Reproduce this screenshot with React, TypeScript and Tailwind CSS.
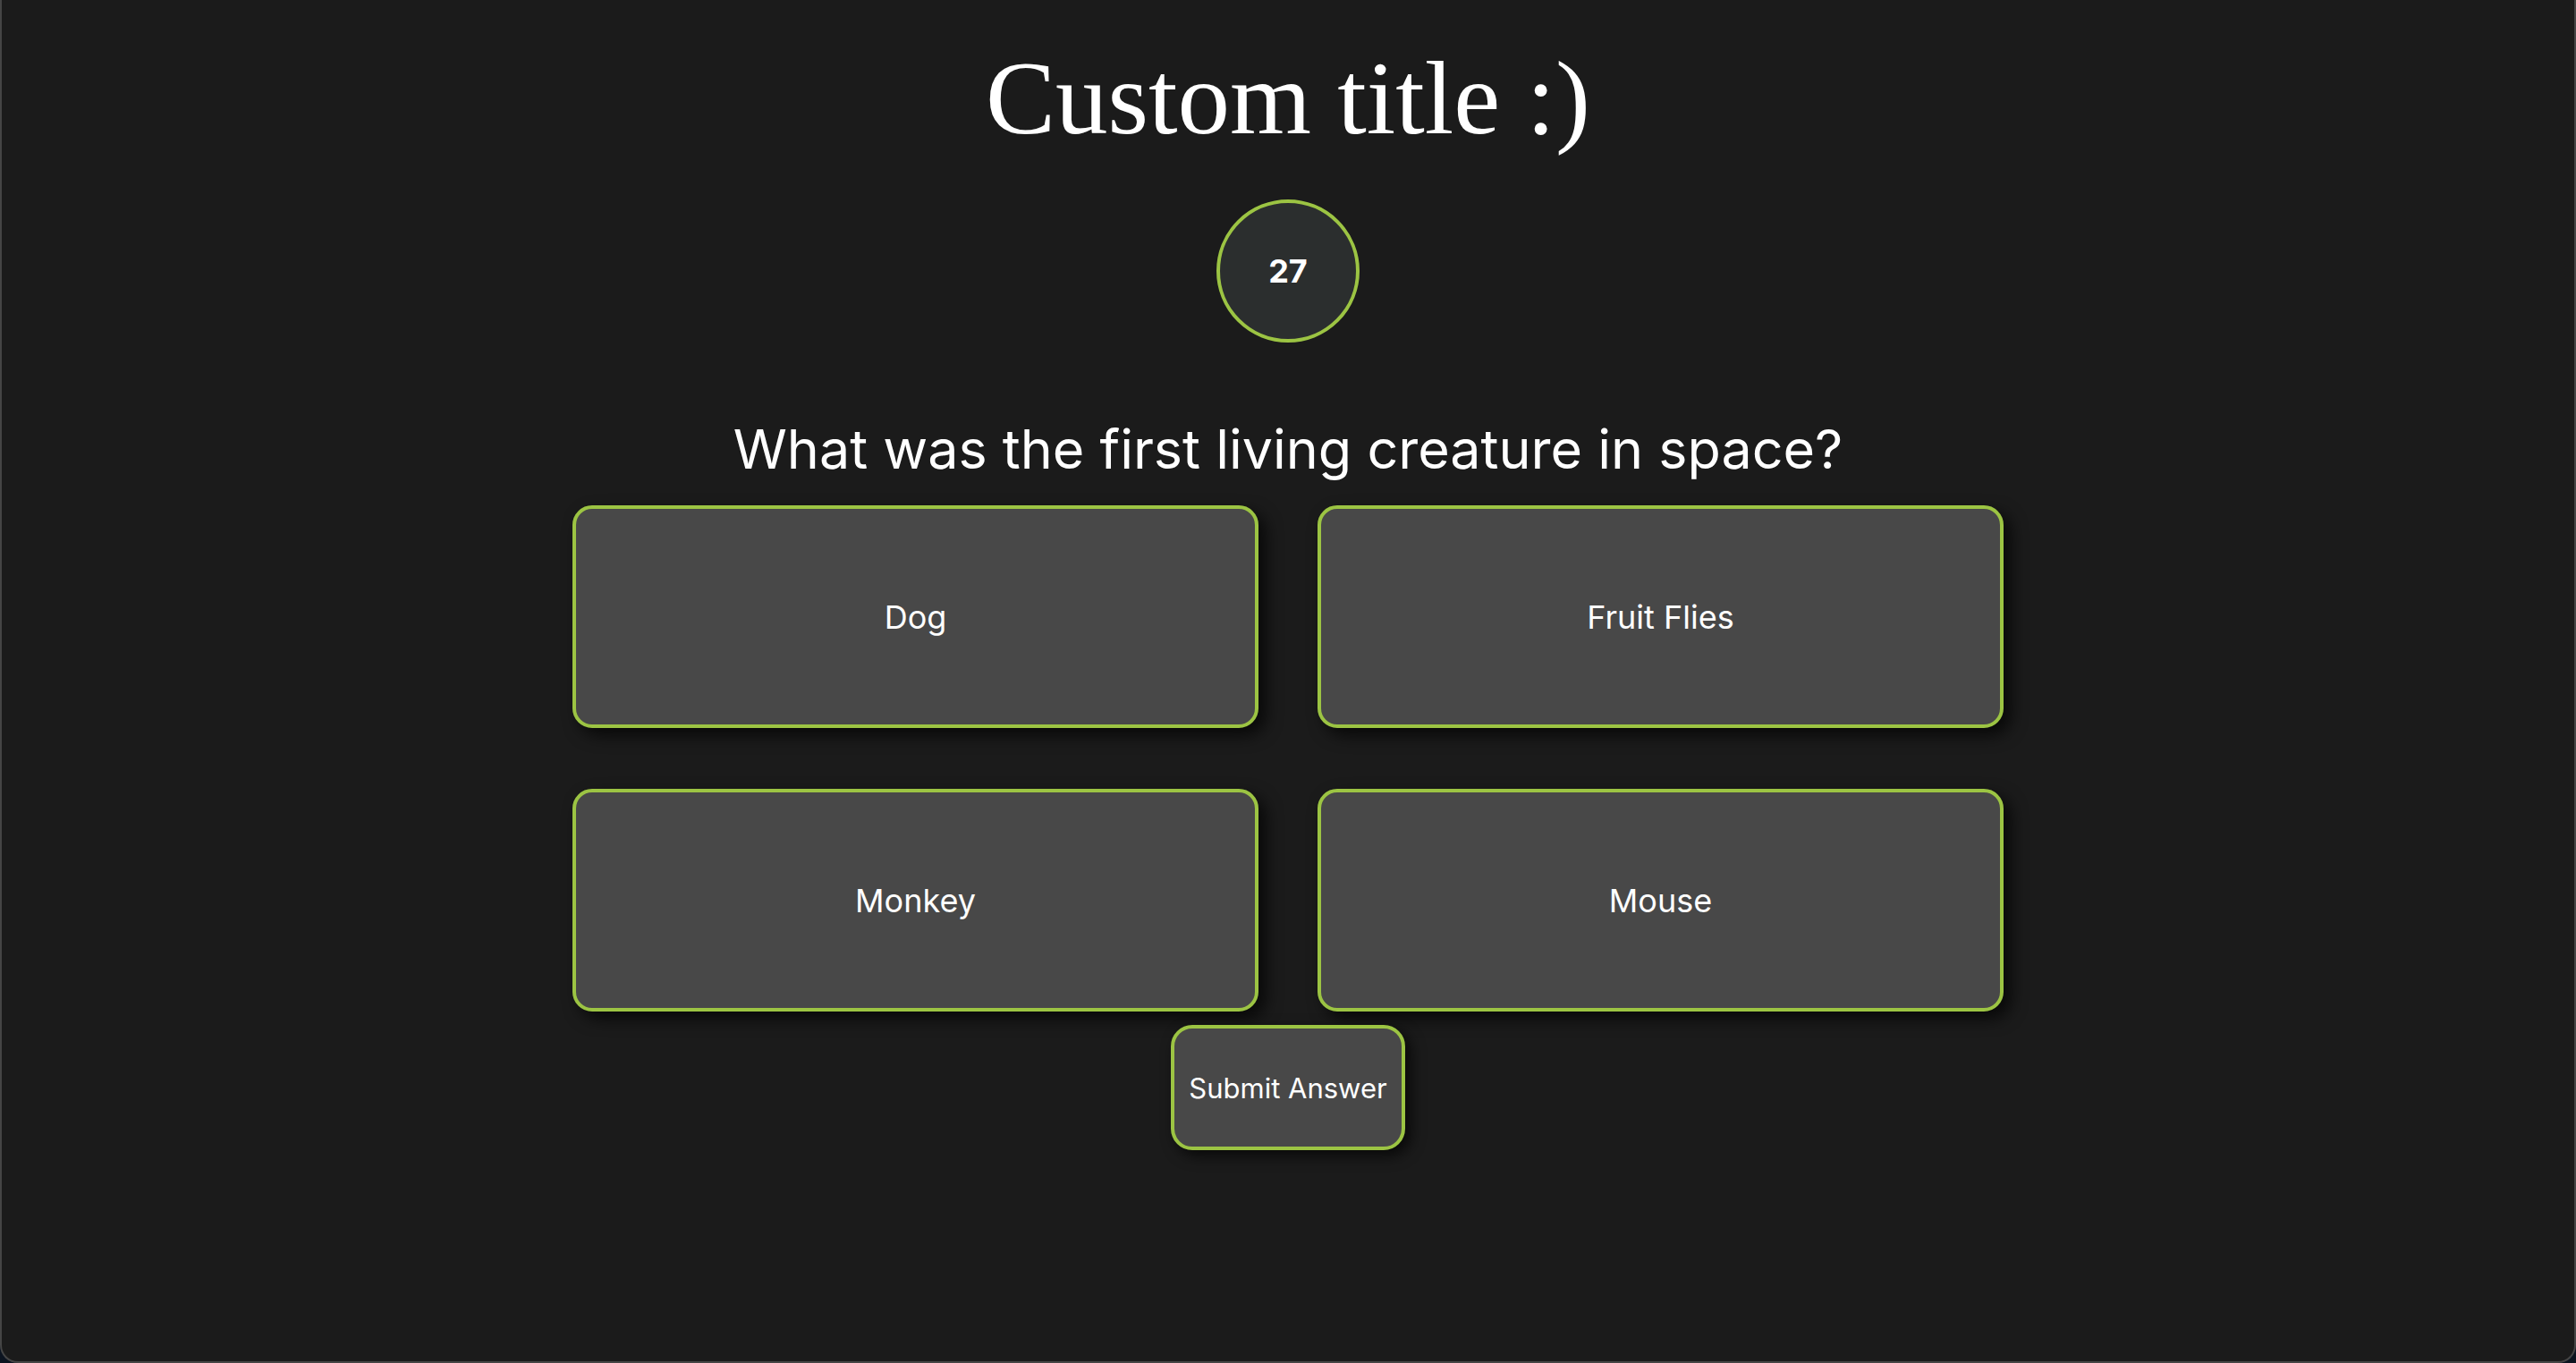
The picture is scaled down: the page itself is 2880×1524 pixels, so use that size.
const answers = ["Dog", "Fruit Flies", "Monkey", "Mouse"];

const AnswerButton = ({ label }: { label: string }) => {
  return (
    <button className="h-[249px] rounded-[22px] border-4 border-[#9cc443] bg-[#484848] text-[36px] leading-none text-white shadow-[8px_8px_18px_rgba(0,0,0,0.7)] flex items-center justify-center">
      {label}
    </button>
  );
};

const App = () => {
  return (
    <div className="h-screen w-full bg-[#0c1420]">
      <div
        className="h-full w-full rounded-b-[20px] border-x-2 border-b-2 border-[#454545] bg-[#1b1b1b] flex flex-col items-center"
        style={{ fontFamily: "Inter, 'Noto Sans', sans-serif" }}
      >
        <h1 className="mt-[51px] text-[117px] leading-none text-white font-normal font-['Liberation_Serif',serif]">
          Custom title :)
        </h1>

        <div className="mt-[55px] w-[160px] h-[160px] rounded-full border-4 border-[#9cc443] bg-[#2b2e2e] flex items-center justify-center">
          <span className="text-[36px] font-bold leading-none text-white">27</span>
        </div>

        <h2 className="mt-[89px] text-[61px] leading-none text-white font-normal">
          What was the first living creature in space?
        </h2>

        <div className="mt-[32px] w-[1600px] grid grid-cols-2 gap-x-[66px] gap-y-[68px]">
          {answers.map((a) => (
            <AnswerButton key={a} label={a} />
          ))}
        </div>

        <button className="mt-[15px] w-[262px] h-[140px] rounded-[24px] border-4 border-[#9cc443] bg-[#484848] text-[31px] leading-none text-white shadow-[6px_6px_16px_rgba(0,0,0,0.7)] flex items-center justify-center">
          Submit Answer
        </button>
      </div>
    </div>
  );
};

export default App;
